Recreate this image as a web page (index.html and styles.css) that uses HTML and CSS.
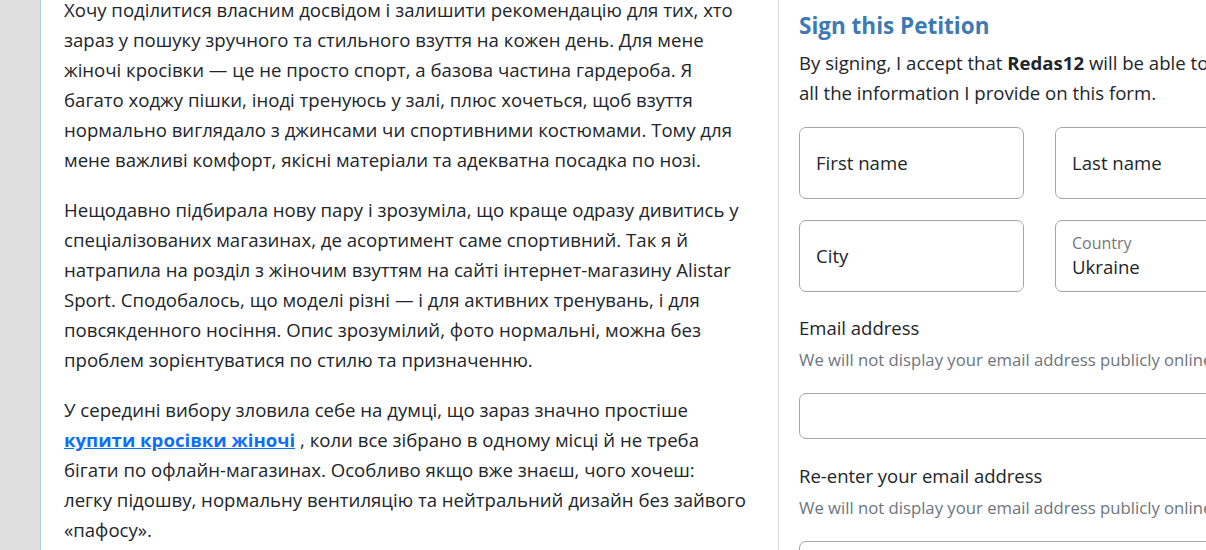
FILE: index.html
```html
<!DOCTYPE html>
<html lang="uk">
<head>
<meta charset="utf-8">
<title>Petition</title>
<link rel="stylesheet" href="styles.css">
</head>
<body>
<div class="page">
  <div class="gutter"></div>
  <main class="article">
    <p>Хочу поділитися власним досвідом і залишити рекомендацію для тих, хто зараз у пошуку зручного та стильного взуття на кожен день. Для мене жіночі кросівки — це не просто спорт, а базова частина гардероба. Я багато ходжу пішки, іноді тренуюсь у залі, плюс хочеться, щоб взуття нормально виглядало з джинсами чи спортивними костюмами. Тому для мене важливі комфорт, якісні матеріали та адекватна посадка по нозі.</p>
    <p>Нещодавно підбирала нову пару і зрозуміла, що краще одразу дивитись у спеціалізованих магазинах, де асортимент саме спортивний. Так я й натрапила на розділ з жіночим взуттям на сайті інтернет-магазину Alistar Sport. Сподобалось, що моделі різні — і для активних тренувань, і для повсякденного носіння. Опис зрозумілий, фото нормальні, можна без проблем зорієнтуватися по стилю та призначенню.</p>
    <p>У середині вибору зловила себе на думці, що зараз значно простіше <a class="link" href="#">купити кросівки жіночі</a> , коли все зібрано в одному місці й не треба бігати по офлайн-магазинах. Особливо якщо вже знаєш, чого хочеш: легку підошву, нормальну вентиляцію та нейтральний дизайн без зайвого «пафосу».</p>
  </main>
  <aside class="sidebar">
    <h2 class="title">Sign this Petition</h2>
    <p class="intro">By signing, I accept that <strong>Redas12</strong> will be able to see all the information I provide on this form.</p>
    <div class="row">
      <div class="field"><span class="value">First name</span></div>
      <div class="field"><span class="value">Last name</span></div>
    </div>
    <div class="row">
      <div class="field"><span class="value">City</span></div>
      <div class="field floating"><span class="float-label">Country</span><span class="value">Ukraine</span></div>
    </div>
    <div class="group">
      <div class="label">Email address</div>
      <div class="help">We will not display your email address publicly online.</div>
      <div class="input"></div>
    </div>
    <div class="group">
      <div class="label">Re-enter your email address</div>
      <div class="help">We will not display your email address publicly online.</div>
      <div class="input"></div>
    </div>
  </aside>
</div>
</body>
</html>
```

FILE: styles.css
```css
html, body {
  margin: 0;
  padding: 0;
  overflow: hidden;
  background: #fff;
}
body {
  font-family: "Open Sans", "Noto Sans", sans-serif;
  color: #212529;
}
.page {
  display: flex;
  align-items: stretch;
  min-height: 550px;
  width: 1300px;
}
.gutter {
  width: 40px;
  flex: none;
  background: #dedede;
  border-right: 1px solid #a9cbee;
}
.article {
  width: 682px;
  flex: none;
  padding: 0 32px 0 23px;
  margin-top: -5px;
  border-right: 1px solid #dcdcdc;
  font-size: 18.6px;
  line-height: 30px;
}
.article p {
  margin: 0 0 20px;
}
.link {
  color: #0d6efd;
  font-weight: 700;
  text-decoration: underline;
}
.sidebar {
  width: 481px;
  flex: none;
  padding-left: 20px;
  padding-top: 12px;
}
.title {
  margin: 0;
  font-size: 22.5px;
  line-height: 28px;
  font-weight: 700;
  color: #3d7ab5;
}
.intro {
  margin: 8px 20px 19px 0;
  font-size: 18.6px;
  line-height: 30px;
}
.intro strong {
  font-weight: 700;
}
.row {
  display: flex;
  gap: 31px;
  margin-bottom: 21px;
}
.field {
  flex: 1;
  height: 72px;
  box-sizing: border-box;
  border: 1px solid #a6a6a6;
  border-radius: 7px;
  padding: 0 16px;
  display: flex;
  flex-direction: column;
  justify-content: center;
}
.value {
  font-size: 18.6px;
  line-height: 26px;
}
.floating {
  justify-content: flex-start;
  padding-top: 11px;
}
.float-label {
  font-size: 16px;
  line-height: 22px;
  color: #777;
}
.group {
  margin-top: 22px;
}
.row + .group {
  margin-top: 1px;
}
.label {
  font-size: 18.5px;
  line-height: 30px;
}
.help {
  margin-top: 5px;
  font-size: 16.7px;
  line-height: 24px;
  color: #6c757d;
}
.input {
  margin-top: 21px;
  height: 46px;
  box-sizing: border-box;
  border: 1px solid #a6a6a6;
  border-radius: 7px;
}
```
